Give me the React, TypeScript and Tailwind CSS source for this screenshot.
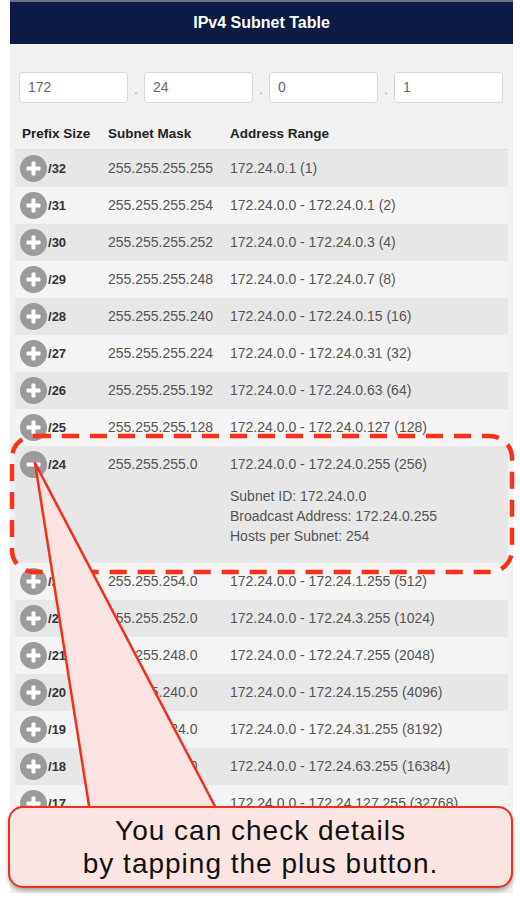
import React from "react";

// Subnet rows for 172.24.0.1, /32 down to /17. The /24 row is expanded.
const IP = [172, 24, 0, 1];

function maskOf(prefix: number): string {
  const bits = prefix === 0 ? 0 : (0xffffffff << (32 - prefix)) >>> 0;
  return [24, 16, 8, 0].map((s) => (bits >>> s) & 255).join(".");
}

function rangeOf(prefix: number) {
  const ip = ((IP[0] << 24) | (IP[1] << 16) | (IP[2] << 8) | IP[3]) >>> 0;
  const size = 2 ** (32 - prefix);
  const net = Math.floor(ip / size) * size;
  const last = net + size - 1;
  const fmt = (n: number) => [24, 16, 8, 0].map((s) => Math.floor(n / 2 ** s) % 256).join(".");
  return { first: fmt(net), last: fmt(last), size };
}

function rangeLabel(prefix: number) {
  const r = rangeOf(prefix);
  if (r.size === 1) return `${r.first} (1)`;
  return `${r.first} - ${r.last} (${r.size})`;
}

const PREFIXES = Array.from({ length: 16 }, (_, i) => 32 - i);
const OPEN = 24;

function ToggleIcon({ open }: { open: boolean }) {
  return (
    <span className="flex size-[27px] shrink-0 items-center justify-center rounded-full bg-[#9b9b9b]">
      <svg width="17" height="17" viewBox="0 0 17 17">
        <rect x="1.5" y="6.5" width="14" height="4" rx="1" fill="#fff" />
        {!open && <rect x="6.5" y="1.5" width="4" height="14" rx="1" fill="#fff" />}
      </svg>
    </span>
  );
}

function Row({ prefix, dark }: { prefix: number; dark: boolean }) {
  const open = prefix === OPEN;
  const r = rangeOf(prefix);
  return (
    <div className={dark ? "bg-[#e7e7e7]" : "bg-[#f4f4f4]"}>
      <div className="flex h-[37px] items-center text-[14px] text-[#555]">
        <div className="flex w-[93px] items-center gap-[1px] pl-[5px]">
          <ToggleIcon open={open} />
          <span className="text-[13px] font-bold text-[#333]">/{prefix}</span>
        </div>
        <div className="w-[122px]">{maskOf(prefix)}</div>
        <div>{rangeLabel(prefix)}</div>
      </div>
      {open && (
        <div className="pb-[17px] pl-[215px] pt-[3px] text-[14px] leading-[20px] text-[#555]">
          <div>Subnet ID: {r.first}</div>
          <div>Broadcast Address: {r.last}</div>
          <div>Hosts per Subnet: {r.size - 2}</div>
        </div>
      )}
    </div>
  );
}

export default function App() {
  return (
    <div className="relative h-[900px] w-[520px] overflow-hidden bg-white font-['Liberation_Sans',Arial,sans-serif]">
      <div className="ml-[10px] h-[893px] w-[503px] overflow-hidden bg-[#f1f1f1]">
        <div className="h-[2px] bg-[#6f7080]" />
        <div className="flex h-[42px] items-center justify-center bg-[#0c1a44] text-[16px] font-bold text-white">
          IPv4 Subnet Table
        </div>

        {/* octet inputs */}
        <div className="flex items-center pl-[9px] pr-[10px] pt-[28px]">
          {IP.map((o, i) => (
            <React.Fragment key={i}>
              {i > 0 && <span className="w-4 pt-[4px] text-center text-[12px] text-[#999]">.</span>}
              <div className="flex h-[31px] flex-1 items-center rounded-[4px] border border-[#d6d6d6] bg-white pl-[8px] text-[14px] text-[#666]">
                {o}
              </div>
            </React.Fragment>
          ))}
        </div>

        <div className="mt-[16px] px-[5px]">
          <div className="flex h-[31px] items-center border-b border-[#dcdcdc] text-[13.5px] font-bold text-[#222]">
            <div className="w-[93px] pl-[7px]">Prefix Size</div>
            <div className="w-[122px]">Subnet Mask</div>
            <div>Address Range</div>
          </div>
          {PREFIXES.map((p, i) => (
            <Row key={p} prefix={p} dark={i % 2 === 0} />
          ))}
        </div>
      </div>

      {/* annotation: dashed frame + callout pointer */}
      <svg className="absolute left-0 top-0" width="520" height="900" viewBox="0 0 520 900">
        <rect
          x="12"
          y="436"
          width="500"
          height="136"
          rx="22"
          fill="none"
          stroke="#f8311a"
          strokeWidth="4.5"
          strokeDasharray="17 11"
        />
        <polygon points="35,463 90,812 218,812" fill="#fae3e1" stroke="#f2301a" strokeWidth="2.5" strokeLinejoin="round" />
      </svg>

      <div className="absolute left-[8px] top-[806px] flex h-[82px] w-[505px] flex-col items-center justify-center rounded-[15px] border-[2.5px] border-[#f2301a] bg-[#fbe5e3] text-[28px] leading-[33px] tracking-[1px] text-[#111] shadow-[0_3px_4px_rgba(0,0,0,0.3)]">
        <div>You can check details</div>
        <div>by tapping the plus button.</div>
      </div>
    </div>
  );
}
